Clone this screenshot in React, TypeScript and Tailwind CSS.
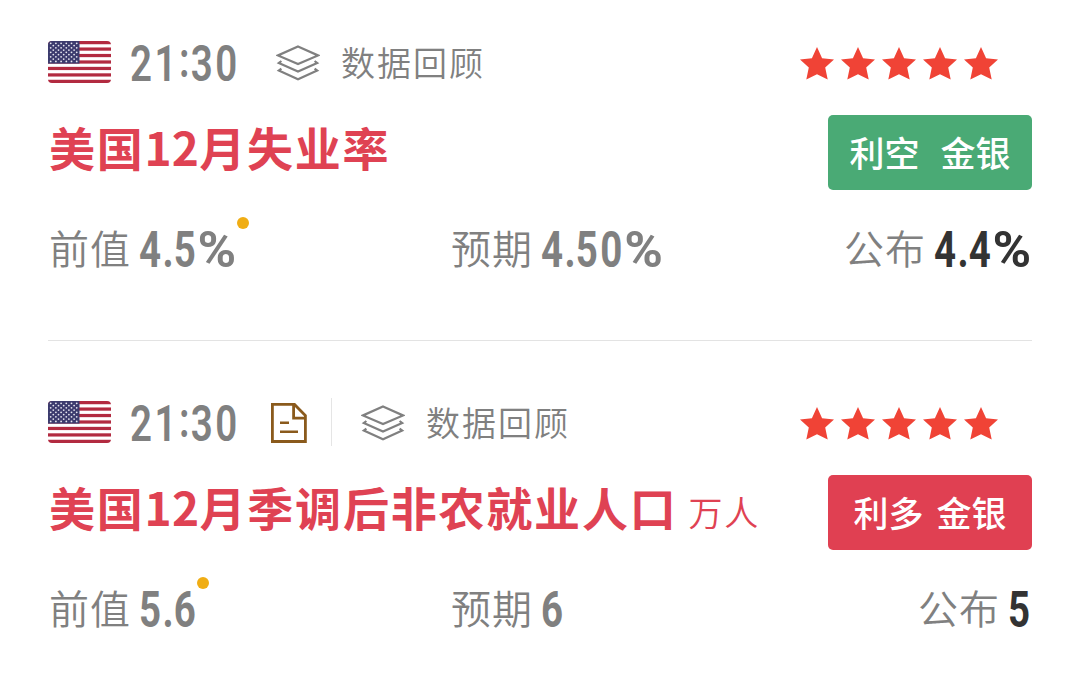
const starRow = [0, 1, 2, 3, 4];
const stripes = [0, 2, 4, 6, 8, 10, 12];

function Flag() {
  return (
    <svg className="block h-[42px] w-[63px] shrink-0 rounded-[4px]" viewBox="0 0 63 42">
      <rect width="63" height="42" fill="#fff" />
      {stripes.map((i) => (
        <rect key={i} y={(i * 42) / 13} width="63" height={42 / 13} fill="#b22a40" />
      ))}
      <rect width="31.5" height="22.6" fill="#3c3b6e" />
      {Array.from({ length: 9 }, (_, r) =>
        Array.from({ length: r % 2 ? 5 : 6 }, (_, c) => (
          <circle key={`${r}-${c}`} cx={2.7 + c * 5.2 + (r % 2 ? 2.6 : 0)} cy={2.3 + r * 2.26} r="0.9" fill="#e6e6f0" />
        )),
      )}
    </svg>
  );
}

function Layers() {
  return (
    <svg className="mt-[2px] block h-[36px] w-[44px] shrink-0" viewBox="0 0 44 36" fill="none" stroke="#808080" strokeWidth="2.2">
      <path d="M22 1.5 42 10.4 22 19 2 10.4Z" />
      <path d="M5.4 16 2.8 18 22 26.5 41.2 18 38.6 16" />
      <path d="M5.4 23.6 2.8 25.6 22 34.2 41.2 25.6 38.6 23.6" />
    </svg>
  );
}

function Doc() {
  return (
    <svg className="mt-[2px] block h-[40px] w-[36px] shrink-0" viewBox="0 0 36 40" fill="none" stroke="#8a5a1c" strokeWidth="2.8">
      <path d="M1.4 1.4H23.5L34.4 12.5V38.5H1.4Z" />
      <path d="M22.6 1.4V15.2H34.4" />
      <path d="M9 19.8H18M9 28.8H27" strokeWidth="2.4" />
    </svg>
  );
}

function Stars() {
  return (
    <div className="flex gap-[7px]">
      {starRow.map((i) => (
        <svg key={i} className="mt-[2px] block h-[33px] w-[34px]" viewBox="0 0 34 33" fill="#f04336">
          <path d="M17 0 22.1 11.2 34 12.4 25.2 20.5 27.7 32.6 17 27.2 6.3 32.6 8.8 20.5 0 12.4 11.9 11.2Z" />
        </svg>
      ))}
    </div>
  );
}

const glyphStyles: Record<string, string> = {
  '.': 'tracking-[0px] -ml-[1.5px]',
  ':': 'relative top-[-4px] tracking-[1.4px]',
  '%': 'inline-block origin-left scale-x-[1.36] -ml-[1px]',
};

function Num({ value, className }: { value: string; className: string }) {
  return (
    <span className={`block h-[50px] shrink-0 whitespace-nowrap font-['Roboto',sans-serif] text-[50px] leading-[50px] tracking-[3.3px] ${className}`}>
      <span className="inline-block origin-left scale-x-[0.77]">
        {value.split(/([.:%])/).filter(Boolean).map((part, i) => (
          <span key={i} className={glyphStyles[part]}>{part}</span>
        ))}
      </span>
    </span>
  );
}

function Label({ children }: { children: string }) {
  return <span className="-mt-[3px] ml-px block w-[90px] shrink-0 whitespace-nowrap text-[40px] font-[350] leading-[50px] tracking-[1px]">{children}</span>;
}

function Review() {
  return <span className="block whitespace-nowrap text-[34px] font-[350] leading-[44px] tracking-[2px]">数据回顾</span>;
}

export default function App() {
  return (
    <main className="h-[693px] w-[1080px] overflow-hidden bg-white px-12 font-['Noto_Sans_CJK_SC',sans-serif] text-[#808080]">
      <section className="h-[341px] border-b border-[#e3e3e3] pt-[37px]">
        <div className="flex h-[50px] items-center">
          <Flag />
          <Num value="21:30" className="mt-[3px] ml-[19px] w-[146px] font-semibold" />
          <Layers />
          <span className="ml-[21px]"><Review /></span>
          <span className="ml-auto mr-[34px]"><Stars /></span>
        </div>
        <div className="mt-[28px] flex h-[75px] items-start justify-between">
          <h2 className="-mt-1 ml-px whitespace-nowrap text-[46px] font-bold leading-[70px] tracking-[1.7px] text-[#df4253]">
            美国<span className="tracking-[0.3px]">12</span>月失业率
          </h2>
          <div className="flex h-[75px] w-[204px] items-center justify-center gap-[21px] rounded-[5px] bg-[#4aaa75] text-[35px] font-medium text-white">
            <span>利空</span><span>金银</span>
          </div>
        </div>
        <div className="mt-[35px] flex h-[50px]">
          <div className="relative flex w-[402px]">
            <Label>前值</Label>
            <Num value="4.5%" className="w-[98px] font-bold" />
            <i className="absolute left-[189px] top-[-8px] h-3 w-3 rounded-full bg-[#f0ad14]" />
          </div>
          <div className="flex"><Label>预期</Label><Num value="4.50%" className="w-[124px] font-bold" /></div>
          <div className="ml-auto flex"><Label>公布</Label><Num value="4.4%" className="w-[98px] font-bold text-[#333]" /></div>
        </div>
      </section>
      <section className="pt-[56px]">
        <div className="flex h-[50px] items-center">
          <Flag />
          <Num value="21:30" className="mt-[3px] ml-[19px] w-[141px] font-semibold" />
          <Doc />
          <span className="ml-[24px] mr-[29px] h-[48px] w-px bg-[#e5e5e5]" />
          <Layers />
          <span className="ml-[21px]"><Review /></span>
          <span className="ml-auto mr-[34px]"><Stars /></span>
        </div>
        <div className="mt-[28px] flex h-[75px] items-start justify-between">
          <h2 className="-mt-1 ml-px whitespace-nowrap text-[46px] font-bold leading-[70px] tracking-[1.8px] text-[#df4253]">
            美国<span className="tracking-[0.3px]">12</span>月季调后非农就业人口<span className="ml-[11px] text-[34px] font-[350] leading-none">万人</span>
          </h2>
          <div className="flex h-[75px] w-[204px] items-center justify-center gap-[13px] rounded-[5px] bg-[#e04052] text-[35px] font-medium text-white">
            <span>利多</span><span>金银</span>
          </div>
        </div>
        <div className="mt-[35px] flex h-[50px]">
          <div className="relative flex w-[402px]">
            <Label>前值</Label>
            <Num value="5.6" className="w-[58px] font-bold" />
            <i className="absolute left-[149px] top-[-8px] h-3 w-3 rounded-full bg-[#f0ad14]" />
          </div>
          <div className="flex"><Label>预期</Label><Num value="6" className="w-[24px] font-bold" /></div>
          <div className="ml-auto flex"><Label>公布</Label><Num value="5" className="w-[24px] font-bold text-[#333]" /></div>
        </div>
      </section>
    </main>
  );
}
